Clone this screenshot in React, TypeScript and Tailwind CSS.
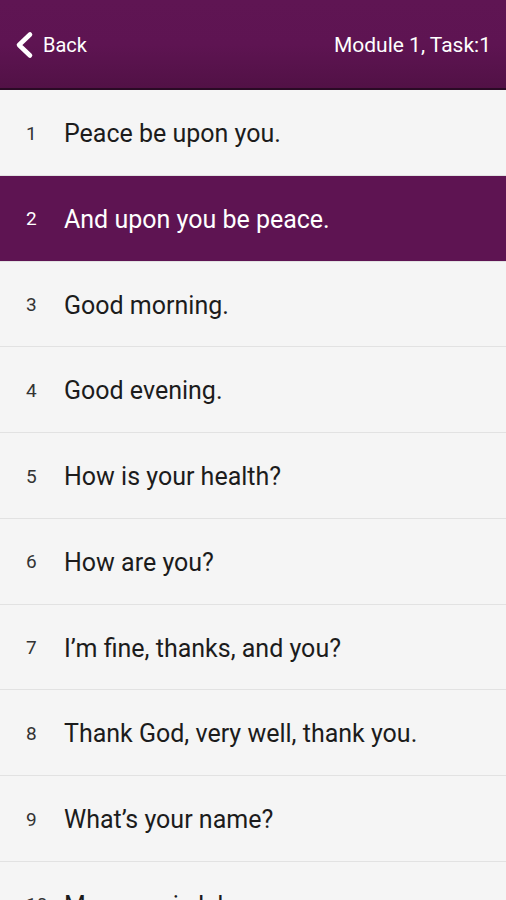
import React from 'react';

const items = [
  'Peace be upon you.',
  'And upon you be peace.',
  'Good morning.',
  'Good evening.',
  'How is your health?',
  'How are you?',
  'I’m fine, thanks, and you?',
  'Thank God, very well, thank you.',
  'What’s your name?',
  'My name is Ishaq.',
];

const App: React.FC = () => {
  return (
    <div className="w-[506px] h-[900px] overflow-hidden bg-[#f5f5f5]" style={{ fontFamily: 'Roboto, "Noto Sans", sans-serif' }}>
      <div className="h-[88px] bg-gradient-to-b from-[#5f1553] via-[#5e1452] to-[#521146] flex items-center justify-between pl-[14px] pr-[15px] text-white">
        <button className="flex items-center gap-[9px] pt-[2px]">
          <svg width="20" height="28" viewBox="0 0 20 28" fill="none">
            <path d="M16 3.5 L5 14 L16 24.5" stroke="white" strokeWidth="4.6" strokeLinecap="round" strokeLinejoin="round" />
          </svg>
          <span className="text-[20px] leading-none">Back</span>
        </button>
        <span className="text-[21px] leading-none pt-[2px]">Module 1, Task:1</span>
      </div>
      <div className="h-[2px] bg-[#2a0a25]" />
      <ul>
        {items.map((text, i) => {
          const active = i === 1;
          return (
            <li
              key={i}
              className={`h-[85.75px] pt-[3px] flex items-center border-b border-[#e2e2e2] ${active ? 'bg-[#5e1452] text-white' : 'text-[#1c1c1c]'}`}
            >
              <span className={`w-[64px] pl-[26px] text-[19px] ${active ? 'text-white' : 'text-[#333]'}`}>{i + 1}</span>
              <span className="text-[25px] whitespace-nowrap">{text}</span>
            </li>
          );
        })}
      </ul>
    </div>
  );
};

export default App;
